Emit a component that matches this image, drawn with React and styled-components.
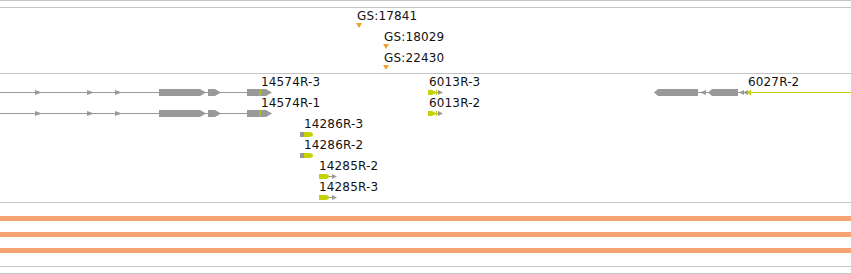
import React from 'react';
import styled, { createGlobalStyle } from 'styled-components';

const GRAY = '#999999';
const YEL = '#c4d100';
const LINE = '#c4c4c4';

const Global = createGlobalStyle`
  html, body { margin: 0; padding: 0; background: #ffffff; }
  body { font-family: "DejaVu Sans", Verdana, sans-serif; color: #111111; }
`;

const Browser = styled.div`
  width: 851px;
  height: 274px;
  overflow: hidden;
  border-top: 1px solid ${LINE};
  box-sizing: border-box;
`;

const Track = styled.section`
  height: ${(p) => p.$h}px;
  border-bottom: 1px solid ${LINE};
  display: flex;
  flex-direction: column;
  gap: ${(p) => p.$gap || 0}px;
  padding-top: ${(p) => p.$pt || 0}px;
  box-sizing: border-box;
  flex-shrink: 0;
`;

const Row = styled.div`
  position: relative;
  height: 21px;
  flex-shrink: 0;
`;

const Label = styled.span`
  position: absolute;
  top: ${(p) => p.$top || 0}px;
  left: ${(p) => p.$x}px;
  font-size: 12px;
  line-height: 14px;
  letter-spacing: 0.15px;
  white-space: nowrap;
`;

const Glyph = styled.svg`
  position: absolute;
  top: 14px;
  left: ${(p) => p.$x}px;
  overflow: visible;
  display: block;
`;

const Marker = styled.svg`
  position: absolute;
  top: 15px;
  left: ${(p) => p.$x}px;
  display: block;
`;

const Bar = styled.div`
  height: 5px;
  background: #f4a372;
  flex-shrink: 0;
`;

function GsRow({ x, label }) {
  return (
    <Row>
      <Label $x={x + 1} $top={1}>{label}</Label>
      <Marker $x={x} width="6" height="5" viewBox="0 0 6 5">
        <polygon points="0,0 6,0 3,5" fill="#eea12c" />
      </Marker>
    </Row>
  );
}

function LongGene({ labelX, label }) {
  return (
    <>
      <Label $x={labelX} $top={1}>{label}</Label>
      <Glyph $x={0} width="273" height="9" viewBox="0 0 273 9">
        <rect x="0" y="4" width="262" height="1" fill={GRAY} />
        {[35, 87, 115].map((x) => (
          <polygon key={x} points={`${x},2 ${x + 7},4.5 ${x},7`} fill={GRAY} />
        ))}
        <polygon points="159,1 200,1 206,4.5 200,8 159,8" fill={GRAY} />
        <polygon points="208,1 215,1 221,4.5 215,8 208,8" fill={GRAY} />
        <polygon points="247,1 266,1 272,4.5 266,8 247,8" fill={GRAY} />
        <line x1="261" y1="1" x2="259.5" y2="8" stroke={YEL} strokeWidth="1" />
      </Glyph>
    </>
  );
}

function SmallGene({ x, labelX, label }) {
  return (
    <>
      <Label $x={labelX} $top={1}>{label}</Label>
      <Glyph $x={x} width="16" height="9" viewBox="0 0 16 9">
        <rect x="0" y="2" width="4" height="5" fill={YEL} />
        <polygon points="3,1.5 9,4.5 3,7.5" fill={YEL} />
        <rect x="8" y="2" width="1" height="5" fill={YEL} />
        <rect x="9" y="4" width="3" height="1" fill={GRAY} />
        <polygon points="10,2 15,4.5 10,7" fill={GRAY} />
      </Glyph>
    </>
  );
}

function ReverseGene({ labelX, label }) {
  return (
    <>
      <Label $x={labelX} $top={1}>{label}</Label>
      <Glyph $x={650} width="201" height="9" viewBox="0 0 201 9">
        <rect x="48" y="4" width="53" height="1" fill={GRAY} />
        <polygon points="4,4.5 8,1 48,1 48,8 8,8" fill={GRAY} />
        <polygon points="56,2 50,4.5 56,7" fill={GRAY} />
        <polygon points="58,4.5 62,1 88,1 88,8 62,8" fill={GRAY} />
        <polygon points="94,2 89,4.5 94,7" fill={GRAY} />
        <polygon points="98,2 93,4.5 98,7" fill={GRAY} />
        <polygon points="97,4.5 101,1.5 101,7.5" fill={YEL} />
        <rect x="101" y="4" width="100" height="1" fill={YEL} />
      </Glyph>
    </>
  );
}

function BulletGene({ x, label }) {
  return (
    <>
      <Label $x={x + 4} $top={1}>{label}</Label>
      <Glyph $x={x} width="14" height="9" viewBox="0 0 14 9">
        <rect x="0" y="2" width="4" height="5" fill={GRAY} />
        <path d="M4 2 H9 Q13 2 13 4.5 Q13 7 9 7 H4 Z" fill={YEL} />
      </Glyph>
    </>
  );
}

function ArrowGene({ x, label }) {
  return (
    <>
      <Label $x={x} $top={1}>{label}</Label>
      <Glyph $x={x} width="19" height="9" viewBox="0 0 19 9">
        <path d="M0 2 H6 Q10 2 10 4.5 Q10 7 6 7 H0 Z" fill={YEL} />
        <polygon points="6,2 10,4.5 6,7" fill={YEL} />
        <rect x="10" y="4" width="4" height="1" fill={GRAY} />
        <polygon points="13,2 18,4.5 13,7" fill={GRAY} />
      </Glyph>
    </>
  );
}

export default function App() {
  return (
    <>
      <Global />
      <Browser>
        <Track $h={7} />
        <Track $h={66}>
          <GsRow x={356} label="GS:17841" />
          <GsRow x={383} label="GS:18029" />
          <GsRow x={383} label="GS:22430" />
        </Track>
        <Track $h={129}>
          <Row>
            <LongGene labelX={261} label="14574R-3" />
            <SmallGene x={428} labelX={429} label="6013R-3" />
            <ReverseGene labelX={748} label="6027R-2" />
          </Row>
          <Row>
            <LongGene labelX={261} label="14574R-1" />
            <SmallGene x={428} labelX={429} label="6013R-2" />
          </Row>
          <Row>
            <BulletGene x={300} label="14286R-3" />
          </Row>
          <Row>
            <BulletGene x={300} label="14286R-2" />
          </Row>
          <Row>
            <ArrowGene x={319} label="14285R-2" />
          </Row>
          <Row>
            <ArrowGene x={319} label="14285R-3" />
          </Row>
        </Track>
        <Track $h={64} $pt={13} $gap={11}>
          <Bar />
          <Bar />
          <Bar />
        </Track>
        <Track $h={7} />
      </Browser>
    </>
  );
}
